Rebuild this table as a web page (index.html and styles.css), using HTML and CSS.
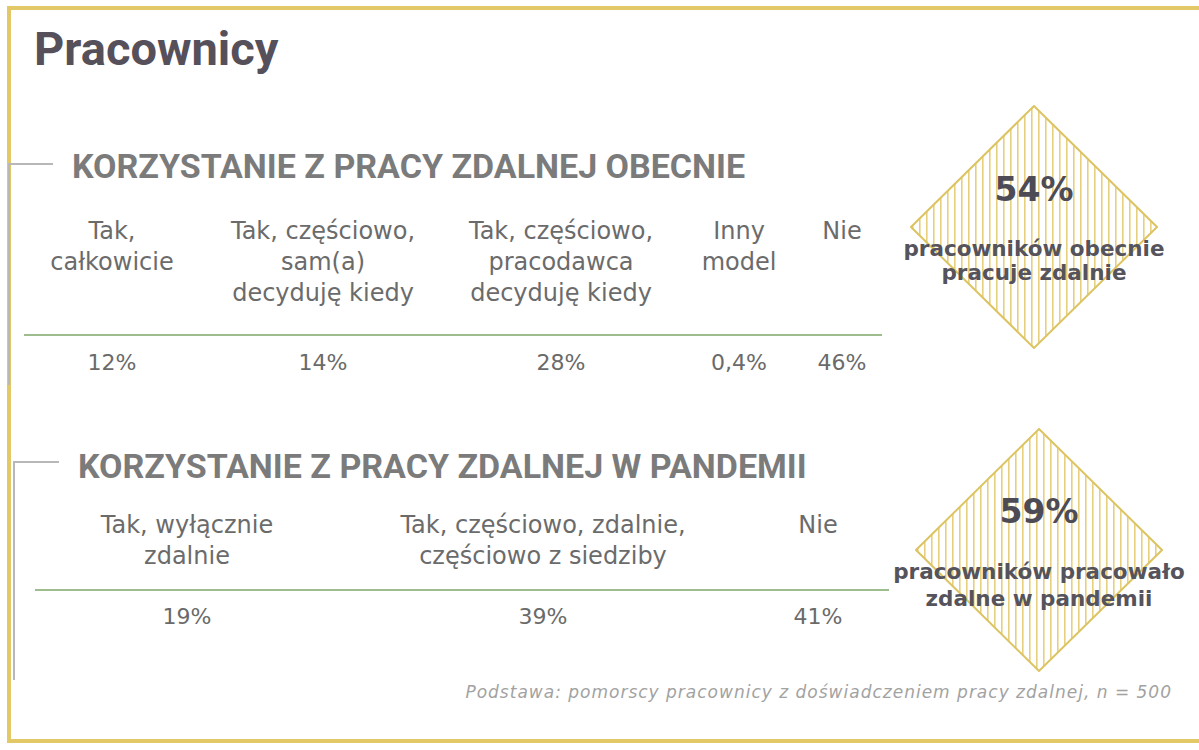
FILE: index.html
```html
<!DOCTYPE html>
<html lang="pl">
<head>
<meta charset="utf-8">
<title>Pracownicy</title>
<link rel="stylesheet" href="styles.css">
</head>
<body>
<div class="frame">
  <h1 class="title">Pracownicy</h1>

  <div class="row">
    <section class="block block-1">
      <div class="block-head">
        <span class="tick"></span>
        <h2 class="heading">KORZYSTANIE Z PRACY ZDALNEJ OBECNIE</h2>
      </div>
      <div class="table table-5">
        <div class="lbl">Tak,<br>całkowicie</div>
        <div class="lbl">Tak, częściowo,<br>sam(a)<br>decyduję kiedy</div>
        <div class="lbl">Tak, częściowo,<br>pracodawca<br>decyduję kiedy</div>
        <div class="lbl">Inny<br>model</div>
        <div class="lbl">Nie</div>
        <div class="rule"></div>
        <div class="val">12%</div>
        <div class="val">14%</div>
        <div class="val">28%</div>
        <div class="val">0,4%</div>
        <div class="val">46%</div>
      </div>
    </section>
    <div class="diamond diamond-1">
      <svg class="shape" width="248" height="244" viewBox="0 0 248 244">
        <defs>
          <pattern id="stripes1" width="7" height="10" patternUnits="userSpaceOnUse">
            <rect x="2" y="0" width="1.6" height="10" fill="#e6d07e"/>
          </pattern>
        </defs>
        <polygon points="124,1 247,122 124,243 1,122" fill="url(#stripes1)" stroke="#dcc463" stroke-width="2"/>
      </svg>
      <div class="dtext">
        <div class="pct">54%</div>
        <div class="dlbl">pracowników obecnie<br>pracuje zdalnie</div>
      </div>
    </div>
  </div>

  <div class="row">
    <section class="block block-2">
      <div class="block-head">
        <span class="tick"></span>
        <h2 class="heading">KORZYSTANIE Z PRACY ZDALNEJ W PANDEMII</h2>
      </div>
      <div class="table table-3">
        <div class="lbl">Tak, wyłącznie<br>zdalnie</div>
        <div class="lbl">Tak, częściowo, zdalnie,<br>częściowo z siedziby</div>
        <div class="lbl">Nie</div>
        <div class="rule"></div>
        <div class="val">19%</div>
        <div class="val">39%</div>
        <div class="val">41%</div>
      </div>
    </section>
    <div class="diamond diamond-2">
      <svg class="shape" width="248" height="244" viewBox="0 0 248 244">
        <defs>
          <pattern id="stripes2" width="7" height="10" patternUnits="userSpaceOnUse">
            <rect x="2" y="0" width="1.6" height="10" fill="#e6d07e"/>
          </pattern>
        </defs>
        <polygon points="124,1 247,122 124,243 1,122" fill="url(#stripes2)" stroke="#dcc463" stroke-width="2"/>
      </svg>
      <div class="dtext">
        <div class="pct">59%</div>
        <div class="dlbl">pracowników pracowało<br>zdalne w pandemii</div>
      </div>
    </div>
  </div>

  <p class="footer">Podstawa: pomorscy pracownicy z doświadczeniem pracy zdalnej, n = 500</p>
</div>
</body>
</html>
```

FILE: styles.css
```css
html, body {
  margin: 0;
  padding: 0;
  background: #ffffff;
  overflow: hidden;
}

body {
  width: 1199px;
  height: 750px;
  font-family: "DejaVu Sans", "Liberation Sans", sans-serif;
  color: #6b6b6b;
}

.frame {
  margin: 6px 0 0 7px;
  width: 1188px;
  height: 729px;
  border: 4px solid #e2c866;
  border-right: none;
}

.title {
  margin: 14px 0 0 23px;
  font-family: Roboto, "Liberation Sans", sans-serif;
  font-weight: 700;
  font-size: 47px;
  line-height: 50px;
  color: #56505a;
}

.row {
  display: flex;
  align-items: flex-start;
}

.block {
  flex: none;
  border-left: 2px solid #b8b8b8;
}

.block-1 {
  width: 885px;
  margin: 89px 0 0 -3px;
  padding-bottom: 7px;
}

.block-2 {
  width: 880px;
  margin: 76px 0 0 2px;
  padding-bottom: 48px;
}

.block-head {
  display: flex;
  align-items: flex-start;
  gap: 19px;
}

.tick {
  flex: none;
  width: 43px;
  height: 2px;
  background: #b8b8b8;
}

.block-2 .tick {
  width: 44px;
}

.heading {
  margin: -15px 0 0 0;
  font-family: Roboto, "Liberation Sans", sans-serif;
  font-weight: 700;
  font-size: 34px;
  line-height: 36px;
  color: #7b7b7b;
  white-space: nowrap;
}

.block-2 .heading {
  margin-top: -13px;
}

.table {
  display: grid;
  align-items: start;
  text-align: center;
}

.table-5 {
  grid-template-columns: 176px 246px 230px 126px 80px;
  margin: 32px 0 0 14px;
}

.table-3 {
  grid-template-columns: 304px 408px 142px;
  margin: 26px 0 0 20px;
}

.lbl {
  font-size: 24px;
  line-height: 31px;
  color: #6b6b6b;
  white-space: nowrap;
}

.rule {
  grid-column: 1 / -1;
  height: 2px;
  background: #9dbd8f;
}

.table-5 .rule {
  margin-top: 25px;
}

.table-3 .rule {
  margin-top: 17px;
}

.val {
  font-size: 22px;
  line-height: 31px;
  color: #6a6a6a;
}

.table-5 .val {
  margin-top: 11px;
}

.table-3 .val {
  margin-top: 10px;
}

.diamond {
  flex: none;
  display: grid;
  width: 248px;
  height: 244px;
}

.diamond-1 {
  margin: 31px 0 0 15px;
}

.diamond-2 {
  margin: 43px 0 0 20px;
}

.shape,
.dtext {
  grid-area: 1 / 1;
}

.shape {
  display: block;
}

.dtext {
  display: flex;
  flex-direction: column;
  align-items: center;
  margin: 0 -40px;
  padding-top: 65px;
  font-weight: 700;
  white-space: nowrap;
}

.diamond-2 .dtext {
  padding-top: 64px;
}

.pct {
  font-size: 33px;
  line-height: 40px;
  color: #4d4b55;
}

.dlbl {
  margin-top: 27px;
  font-size: 21.5px;
  line-height: 24px;
  text-align: center;
  color: #55535b;
}

.diamond-2 .dlbl {
  line-height: 27px;
  margin-top: 26px;
}

.footer {
  width: 1161px;
  margin: 1px 0 0 0;
  font-size: 17px;
  line-height: 22px;
  letter-spacing: 1px;
  font-style: italic;
  text-align: right;
  color: #a2a2a2;
  white-space: nowrap;
}
```
